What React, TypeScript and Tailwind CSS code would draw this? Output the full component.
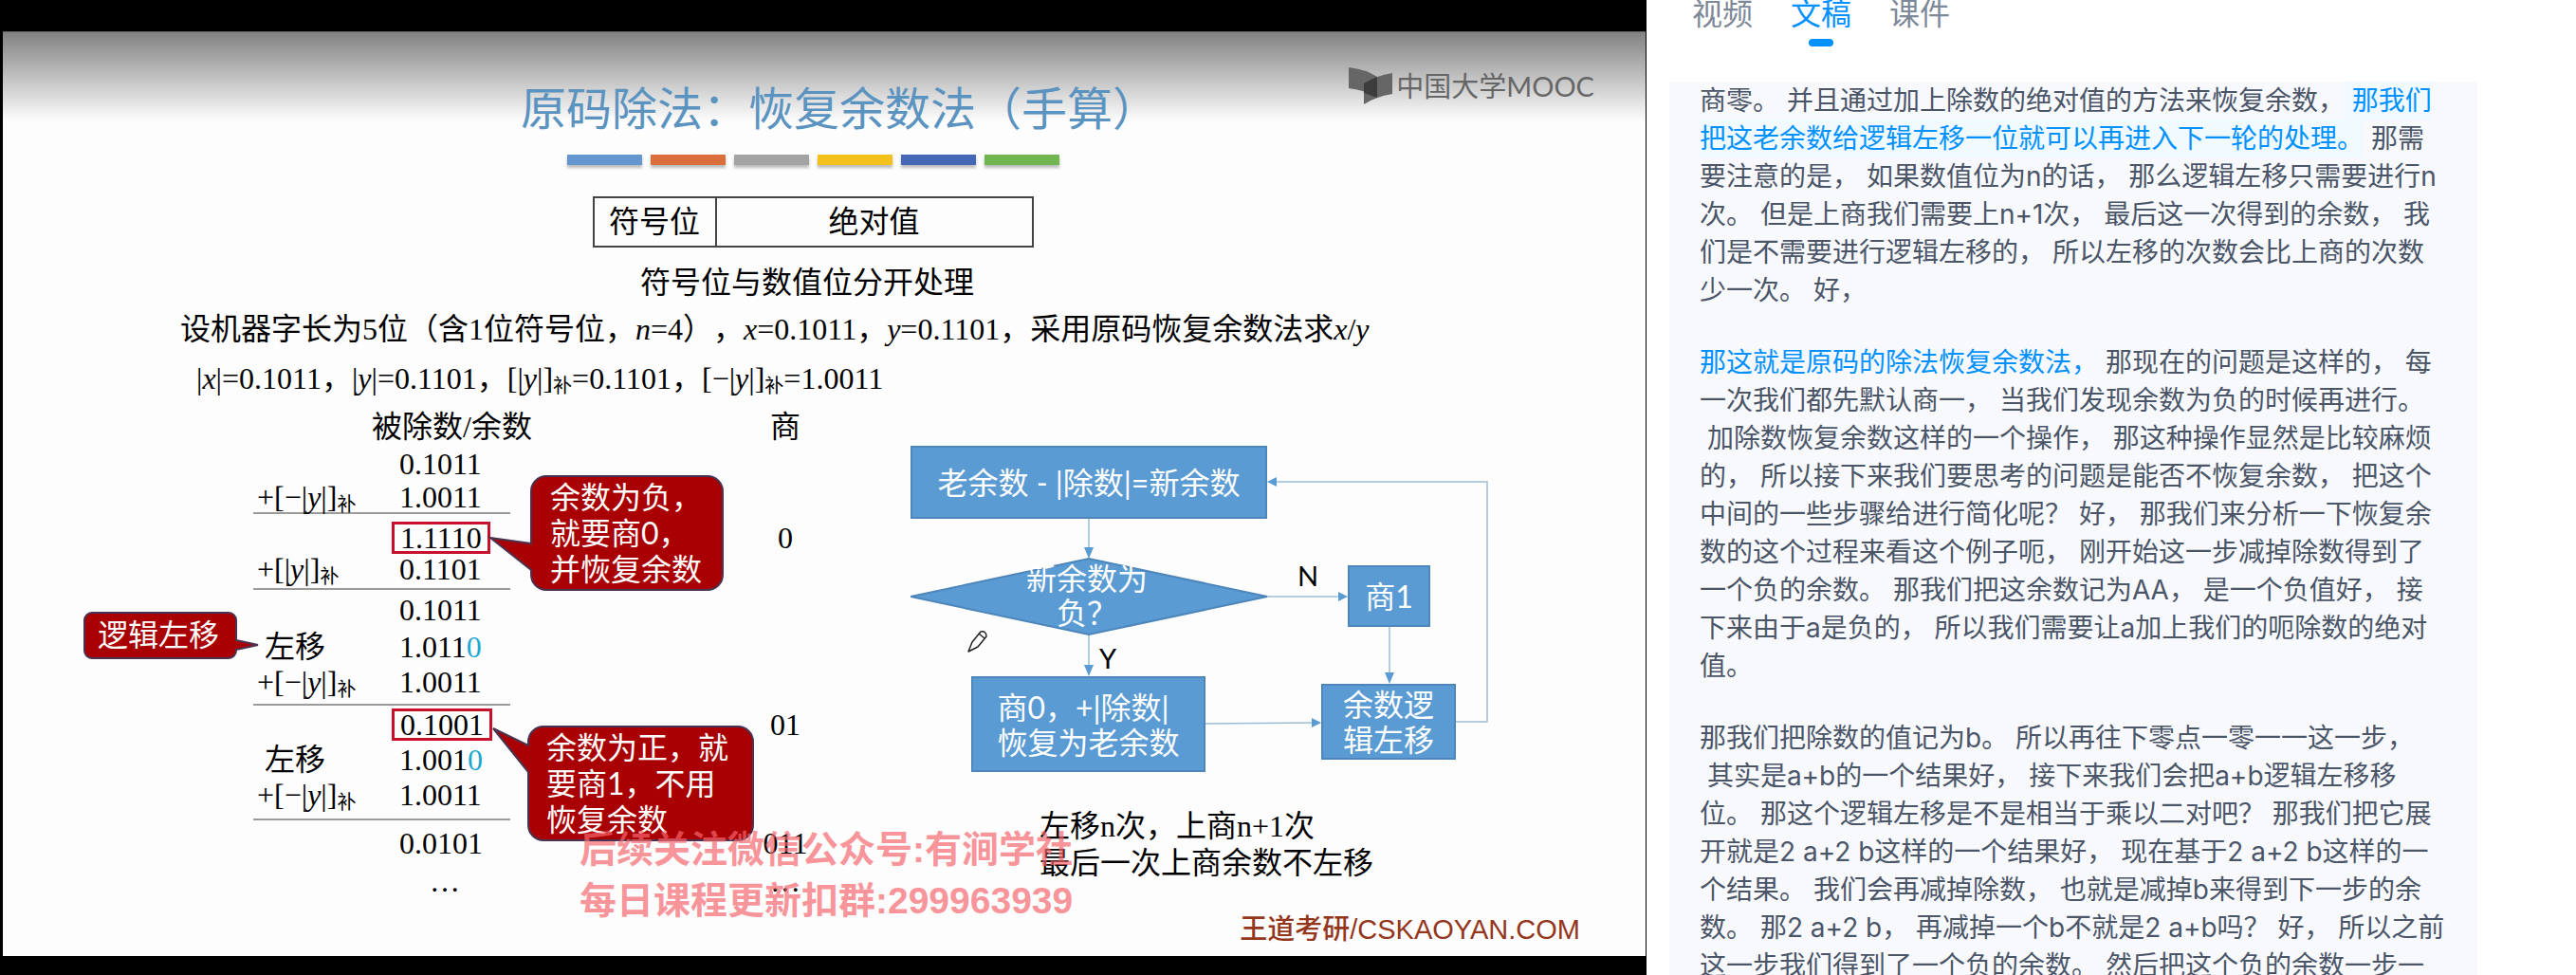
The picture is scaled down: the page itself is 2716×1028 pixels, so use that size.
import React, { useState } from 'react';

type Row = {
  label?: React.ReactNode;
  value: React.ReactNode;
  quotient?: string;
  height: string;
  pad?: string;
  ruled?: boolean;
};

const Y = () => <i>y</i>;
const Sub = () => <span className="relative top-1 text-xl leading-none">补</span>;

const plusNegY = (
  <>
    +[−|<Y />|]<Sub />
  </>
);
const plusY = (
  <>
    +[|<Y />|]<Sub />
  </>
);

const Boxed = ({ children }: { children: React.ReactNode }) => (
  <span className="-ml-2 inline-block h-[34px] border-3 border-[#c8102e] px-1.5 leading-7">{children}</span>
);
const Shifted = ({ children }: { children: React.ReactNode }) => (
  <>
    {children}
    <span className="text-[#1ea7cf]">0</span>
  </>
);

const ROWS: Row[] = [
  { value: '0.1011', height: 'h-[38px]' },
  { label: plusNegY, value: '1.0011', height: 'h-[34px]', ruled: true },
  { value: <Boxed>1.1110</Boxed>, quotient: '0', height: 'h-[42px]', pad: 'pt-2' },
  { label: plusY, value: '0.1101', height: 'h-[38px]', pad: 'pb-1', ruled: true },
  { value: '0.1011', height: 'h-[41px]' },
  { label: <span className="pl-2">左移</span>, value: <Shifted>1.011</Shifted>, height: 'h-[37px]' },
  { label: plusNegY, value: '1.0011', height: 'h-[44px]', pad: 'pb-1', ruled: true },
  { value: <Boxed>0.1001</Boxed>, quotient: '01', height: 'h-[38px]', pad: 'pt-0.5' },
  { label: <span className="pl-2">左移</span>, value: <Shifted>1.001</Shifted>, height: 'h-[38px]' },
  { label: plusNegY, value: '1.0011', height: 'h-[45px]', pad: 'pb-2', ruled: true },
  { value: '0.0101', quotient: '011', height: 'h-[48px]' },
  { value: <span className="pl-8">…</span>, quotient: '…', height: 'h-[38px]', pad: 'pb-3' },
];

function Worksheet() {
  return (
    <table className="w-[621px] table-fixed border-separate border-spacing-0 text-left text-[32px] leading-8 whitespace-nowrap">
      <colgroup>
        <col className="w-[154px]" />
        <col className="w-[117px]" />
        <col className="w-[350px]" />
      </colgroup>
      <thead>
        <tr className="h-10">
          <th colSpan={2} className="p-0 pl-[125px] font-normal">
            被除数/余数
          </th>
          <th className="p-0 pl-[230px] text-center font-normal">商</th>
        </tr>
      </thead>
      <tbody>
        {ROWS.map((row, i) => {
          const line = row.ruled ? 'border-b-2 border-[#9b9b9b]' : '';
          const pad = row.pad ?? '';
          return (
            <tr key={i} className={row.height}>
              <td className={`p-0 pl-1 ${pad} ${line}`}>{row.label}</td>
              <td className={`p-0 ${pad} ${line}`}>{row.value}</td>
              <td className={`p-0 pl-[230px] text-center ${pad}`}>{row.quotient}</td>
            </tr>
          );
        })}
      </tbody>
    </table>
  );
}

function Callouts() {
  return (
    <div className="font-['Lato','Noto_Sans_CJK_SC',sans-serif] text-[32px] leading-[38px] whitespace-nowrap text-white">
      <svg className="absolute top-0 left-0 h-[520px] w-[800px]" viewBox="0 0 800 520" fill="#a90003" stroke="#4a3350" strokeWidth="2">
        <path d="M575 79H743a16 16 0 0 1 16 16V183a16 16 0 0 1-16 16H573a16 16 0 0 1-16-16V178L514 144L557 150V95a16 16 0 0 1 16-16z" />
        <path d="M570 343H775a16 16 0 0 1 16 16V447a16 16 0 0 1-16 16H570a16 16 0 0 1-16-16V391L517 345L554 363V359a16 16 0 0 1 16-16z" />
        <path d="M94 223H238a8 8 0 0 1 8 8V252L269 257L246 262V263a8 8 0 0 1-8 8H94a8 8 0 0 1-8-8V231a8 8 0 0 1 8-8z" />
      </svg>
      <p className="absolute top-[82px] left-[577px]">
        余数为负，
        <br />
        就要商0，
        <br />
        并恢复余数
      </p>
      <p className="absolute top-[346px] left-[573px]">
        余数为正，就
        <br />
        要商1，不用
        <br />
        恢复余数
      </p>
      <p className="absolute top-[227px] left-[100px]">逻辑左移</p>
    </div>
  );
}

function FlowNode({ place, children }: { place: string; children: React.ReactNode }) {
  return (
    <div
      className={`absolute flex items-center justify-center border-2 border-[#4c86ba] bg-[#5b9bd3] text-[32px] leading-[37px] whitespace-nowrap text-white ${place}`}
    >
      {children}
    </div>
  );
}

function FlowChart() {
  return (
    <div className="relative h-[344px] w-[610px] font-['Lato','Noto_Sans_CJK_SC',sans-serif]">
      <svg className="absolute inset-0 h-full w-full" viewBox="0 0 610 344" fill="none">
        <g stroke="#9dbdd6" strokeWidth="1.5">
          <path d="M188 77V110M188 199V234M376 159H452M505 191V242M311 293L424 292M575 291H608V38H386" />
        </g>
        <g fill="#5b9bd3">
          <path d="M183 107h10l-5 12zM183 231h10l-5 12zM451 154v10l10-5zM500 239h10l-5 12zM423 287v10l10-5zM386 33v10l-10-5z" />
          <path d="M0 159L188 119L376 159L188 199z" stroke="#4c86ba" strokeWidth="2" />
        </g>
        <g stroke="#222" strokeWidth="1.5" strokeLinejoin="round" fill="#fff">
          <path d="M61 217L65 207L74 196Q80 195 80 201L71 212z" />
          <path d="M72 198L78 203" />
        </g>
      </svg>
      <FlowNode place="top-0 left-0 h-[77px] w-[376px]">老余数 - |除数|=新余数</FlowNode>
      <p className="absolute top-[122px] left-[111px] w-[150px] text-center text-[32px] leading-9 text-white">
        新余数为
        <br />
        负？
      </p>
      <FlowNode place="top-[126px] left-[461px] h-[65px] w-[87px]">商1</FlowNode>
      <FlowNode place="top-[243px] left-[64px] h-[101px] w-[247px]">
        <p>
          商0，+|除数|
          <br />
          恢复为老余数
        </p>
      </FlowNode>
      <FlowNode place="top-[251px] left-[433px] h-[80px] w-[142px]">
        <p>
          余数逻
          <br />
          辑左移
        </p>
      </FlowNode>
      <span className="absolute top-[121px] left-[408px] text-[29px] leading-8">N</span>
      <span className="absolute top-[208px] left-[199px] text-[29px] leading-8">Y</span>
    </div>
  );
}

function Slide() {
  return (
    <section className="relative flex flex-1 flex-col overflow-hidden border-t border-[#666] bg-[linear-gradient(#828282_0px,#c4c4c4_50px,#fdfdfd_94px)] pt-[52px] font-['Liberation_Serif','Noto_Sans_CJK_SC',serif] text-black [text-spacing-trim:space-all]">
      <div className="absolute top-[37px] right-[54px] flex items-center font-['Lato','Noto_Sans_CJK_SC',sans-serif] text-[#666]">
        <svg className="h-[39px] w-[46px]" viewBox="0 0 46 39">
          <path d="M0 0Q18 2 30 10V32Q18 24 0 22z" fill="#666" />
          <path d="M16 39V17Q28 9 46 6V28Q28 31 16 39z" fill="#666" />
          <path d="M16 17Q22 13 30 10V32L16 27z" fill="#3c3c3c" />
        </svg>
        <span className="pl-1 text-[29px] leading-9">中国大学MOOC</span>
      </div>

      <h1 className="text-center text-[48px] leading-[60px] font-normal text-[#5b93c0]">
        <span className="pl-8">原码除法：恢复余数法（手算）</span>
      </h1>

      <div className="mt-[17px] flex justify-center gap-[9px] pr-6">
        <span className="h-[11px] w-[79px] bg-[#6497cf] shadow-[0_3px_3px_#0004]" />
        <span className="h-[11px] w-[79px] bg-[#dc6e3c] shadow-[0_3px_3px_#0004]" />
        <span className="h-[11px] w-[79px] bg-[#a3a3a3] shadow-[0_3px_3px_#0004]" />
        <span className="h-[11px] w-[79px] bg-[#f2c11c] shadow-[0_3px_3px_#0004]" />
        <span className="h-[11px] w-[79px] bg-[#4568b6] shadow-[0_3px_3px_#0004]" />
        <span className="h-[11px] w-[79px] bg-[#70b550] shadow-[0_3px_3px_#0004]" />
      </div>

      <div className="mt-[33px] flex justify-center pr-6 text-[32px] leading-[50px]">
        <div className="flex border-2 border-[#444] text-center">
          <span className="w-[129px] border-r-2 border-[#444]">符号位</span>
          <span className="w-[332px]">绝对值</span>
        </div>
      </div>

      <p className="mt-3 pr-9 text-center text-[32px] leading-[50px]">符号位与数值位分开处理</p>
      <p className="pl-[187px] text-[32px] leading-12 whitespace-nowrap">
        设机器字长为5位（含1位符号位，<i>n</i>=4），<i>x</i>=0.1011，<i>y</i>=0.1101，采用原码恢复余数法求<i>x</i>/<i>y</i>
      </p>
      <p className="mt-1 pl-[204px] text-[32px] leading-12 whitespace-nowrap">
        |<i>x</i>|=0.1011，|<Y />|=0.1101，[|<Y />|]<Sub />
        =0.1101，[−|<Y />|]<Sub />
        =1.0011
      </p>

      <div className="relative flex flex-1 pt-[7px]">
        <div className="pl-[264px]">
          <Worksheet />
        </div>
        <Callouts />
        <div className="flex flex-1 flex-col pt-[40px] pl-[72px]">
          <FlowChart />
          <p className="pt-[38px] pl-[136px] text-[32px] leading-[39px] whitespace-nowrap">
            左移n次，上商n+1次
            <br />
            最后一次上商余数不左移
          </p>
          <p className="mt-[32px] pr-[69px] text-right font-['Liberation_Sans','Noto_Sans_CJK_SC',sans-serif] text-[29px] leading-9 font-medium whitespace-nowrap text-[#94361c]">
            王道考研/CSKAOYAN.COM
          </p>
        </div>
        <p className="absolute top-[446px] left-[608px] font-['Liberation_Sans','Noto_Sans_CJK_SC',sans-serif] text-[39px] leading-[54px] font-bold whitespace-nowrap text-[#f7666e]/70">
          后续关注微信公众号:有涧学社
          <br />
          每日课程更新扣群:299963939
        </p>
      </div>
    </section>
  );
}

type Piece = { text: string; tone?: 'active' | 'link' };

const TRANSCRIPT: Piece[][][] = [
  [
    [{ text: '商零。 并且通过加上除数的绝对值的方法来恢复余数，' }, { text: ' 那我们', tone: 'active' }],
    [{ text: '把这老余数给逻辑左移一位就可以再进入下一轮的处理。', tone: 'active' }, { text: ' 那需' }],
    [{ text: '要注意的是， 如果数值位为n的话， 那么逻辑左移只需要进行n' }],
    [{ text: '次。 但是上商我们需要上n+1次， 最后这一次得到的余数， 我' }],
    [{ text: '们是不需要进行逻辑左移的， 所以左移的次数会比上商的次数' }],
    [{ text: '少一次。 好，' }],
  ],
  [
    [{ text: '那这就是原码的除法恢复余数法，', tone: 'link' }, { text: ' 那现在的问题是这样的， 每' }],
    [{ text: '一次我们都先默认商一， 当我们发现余数为负的时候再进行。' }],
    [{ text: ' 加除数恢复余数这样的一个操作， 那这种操作显然是比较麻烦' }],
    [{ text: '的， 所以接下来我们要思考的问题是能否不恢复余数， 把这个' }],
    [{ text: '中间的一些步骤给进行简化呢？ 好， 那我们来分析一下恢复余' }],
    [{ text: '数的这个过程来看这个例子呃， 刚开始这一步减掉除数得到了' }],
    [{ text: '一个负的余数。 那我们把这余数记为AA， 是一个负值好， 接' }],
    [{ text: '下来由于a是负的， 所以我们需要让a加上我们的呃除数的绝对' }],
    [{ text: '值。' }],
  ],
  [
    [{ text: '那我们把除数的值记为b。 所以再往下零点一零一一这一步，' }],
    [{ text: ' 其实是a+b的一个结果好， 接下来我们会把a+b逻辑左移移' }],
    [{ text: '位。 那这个逻辑左移是不是相当于乘以二对吧？ 那我们把它展' }],
    [{ text: '开就是2 a+2 b这样的一个结果好， 现在基于2 a+2 b这样的一' }],
    [{ text: '个结果。 我们会再减掉除数， 也就是减掉b来得到下一步的余' }],
    [{ text: '数。 那2 a+2 b， 再减掉一个b不就是2 a+b吗？ 好， 所以之前' }],
    [{ text: '这一步我们得到了一个负的余数。 然后把这个负的余数一步一' }],
  ],
];

const TONES = {
  active: 'inline-block h-10 bg-[#f0faff] text-[#0091ff]',
  link: 'text-[#0091ff]',
};

const TABS = ['视频', '文稿', '课件'];

function Sidebar() {
  const [tab, setTab] = useState('文稿');
  return (
    <aside className="flex h-screen flex-col overflow-hidden bg-white font-['Inter','Noto_Sans_CJK_SC',sans-serif] text-[#4a5568]">
      <div role="tablist" className="flex h-[49px] gap-10 pl-12 text-[32px] leading-[30px]">
        {TABS.map((name) => (
          <button
            key={name}
            type="button"
            role="tab"
            aria-selected={tab === name}
            onClick={() => setTab(name)}
            className={`flex flex-col items-center justify-between ${tab === name ? 'text-[#0091ff]' : 'text-[#7d8898]'}`}
          >
            {name}
            {tab === name && <span className="h-2 w-[26px] rounded-full bg-[#0091ff]" />}
          </button>
        ))}
      </div>
      <div className="mt-[37px] mr-[104px] ml-6 flex flex-1 flex-col gap-9 overflow-hidden bg-[#f8f9fd] pl-8 text-[28px] leading-10">
        {TRANSCRIPT.map((paragraph, i) => (
          <p key={i}>
            {paragraph.map((line, j) => (
              <span key={j} className="block h-10 whitespace-pre">
                {line.map((piece, k) => (
                  <span key={k} className={piece.tone ? TONES[piece.tone] : undefined}>
                    {piece.text}
                  </span>
                ))}
              </span>
            ))}
          </p>
        ))}
      </div>
    </aside>
  );
}

export default function App() {
  return (
    <main className="grid h-screen grid-cols-[1736fr_980fr] overflow-hidden bg-white">
      <div className="flex min-w-0 flex-col bg-black pt-[33px] pr-px pb-5 pl-[3px]">
        <Slide />
      </div>
      <Sidebar />
    </main>
  );
}
